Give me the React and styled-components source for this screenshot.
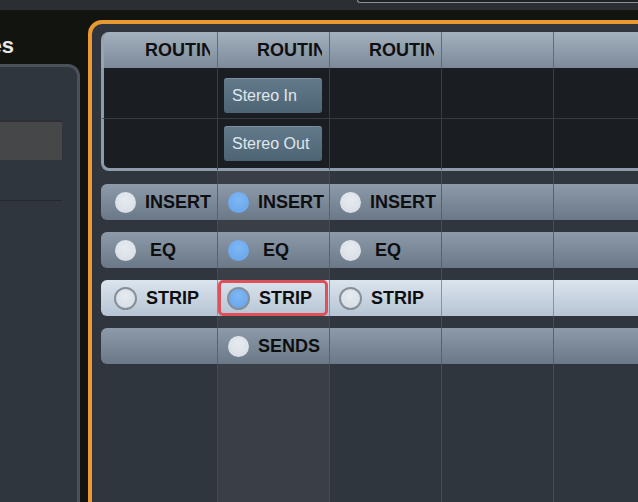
import React from "react";
import styled, { createGlobalStyle, css } from "styled-components";

const GlobalStyle = createGlobalStyle`
  html, body {
    margin: 0;
    padding: 0;
    background: #121410;
    overflow: hidden;
  }
  body {
    font-family: "Liberation Sans", Arial, sans-serif;
  }
`;

const Shell = styled.div`
  width: 638px;
  height: 502px;
  display: flex;
  flex-direction: column;
  overflow: hidden;
`;

const TopBar = styled.div`
  height: 10px;
  flex: none;
  background: #2b2e33;
  display: flex;
  justify-content: flex-end;
  align-items: flex-start;
`;

const TopTab = styled.div`
  width: 280px;
  height: 2px;
  background: #1d2024;
  border-left: 1px solid #8e9297;
  border-bottom: 1px solid #8e9297;
  border-bottom-left-radius: 6px;
`;

const Main = styled.div`
  flex: 1;
  display: flex;
  min-height: 0;
  overflow: hidden;
`;

const Sidebar = styled.div`
  width: 88px;
  flex: none;
  display: flex;
  flex-direction: column;
  padding-right: 8px;
  box-sizing: border-box;
`;

const SideTitle = styled.div`
  height: 54px;
  width: 14px;
  box-sizing: border-box;
  padding-top: 25px;
  display: flex;
  justify-content: flex-end;
  overflow: hidden;
  white-space: nowrap;
  color: #e8e8e8;
  font-size: 22px;
  font-weight: bold;
  line-height: 22px;
`;

const Panel = styled.div`
  flex: 1;
  background: #30363e;
  border-top: 3px solid #4a5159;
  border-right: 3px solid #4a5159;
  border-top-right-radius: 12px;
`;

const PanelBar = styled.div`
  margin-top: 53px;
  width: 62px;
  height: 40px;
  box-sizing: border-box;
  background: #454749;
  border-top: 2px solid #2c2f33;
`;

const PanelLine = styled.div`
  margin-top: 40px;
  width: 62px;
  height: 1px;
  background: #262a2f;
`;

const Frame = styled.div`
  flex: none;
  width: 600px;
  height: 520px;
  margin-top: 10px;
  box-sizing: border-box;
  border: 4px solid #e8992f;
  border-radius: 14px;
  background: #31363e;
  padding: 8px 0 0 9px;
  display: flex;
  overflow: hidden;
`;

const Column = styled.div`
  flex: none;
  width: ${(p) => p.$width}px;
  display: flex;
  flex-direction: column;
  background: ${(p) => (p.$active ? "#3a3f46" : "#30363e")};
`;

const HeadCell = styled.div`
  height: 36px;
  box-sizing: border-box;
  display: flex;
  align-items: center;
  padding: 0 7px 0 39px;
  background: linear-gradient(#a3b0be, #7d8a99);
  border-right: 1px solid #5f6b78;
  ${(p) =>
    p.$first &&
    css`
      padding-left: 41px;
      border-left: 3px solid #97a4b2;
      border-top-left-radius: 8px;
    `}
`;

const HeadText = styled.span`
  overflow: hidden;
  white-space: nowrap;
  font-size: 18px;
  font-weight: bold;
  color: #0f1012;
`;

const RouteCell = styled.div`
  height: ${(p) => (p.$last ? 52 : 51)}px;
  box-sizing: border-box;
  display: flex;
  align-items: center;
  padding-top: ${(p) => (p.$last ? 0 : 5)}px;
  background: #1a1d21;
  border-right: 1px solid #363c44;
  border-bottom: ${(p) => (p.$last ? "3px solid #8d9bab" : "1px solid #363c44")};
  ${(p) =>
    p.$first &&
    css`
      border-left: 3px solid #8d9bab;
    `}
  ${(p) =>
    p.$first &&
    p.$last &&
    css`
      border-bottom-left-radius: 8px;
    `}
`;

const RouteButton = styled.div`
  margin-left: 6px;
  width: 98px;
  height: 35px;
  box-sizing: border-box;
  display: flex;
  align-items: center;
  padding-left: 8px;
  border-radius: 3px;
  border-top: 1px solid #7891a1;
  background: linear-gradient(#617a8b, #4d6474);
  color: #e0e7ec;
  font-size: 16px;
`;

const Spacer = styled.div`
  height: ${(p) => p.$h}px;
  flex: none;
  box-sizing: border-box;
  border-right: 1px solid #454c54;
`;

const Filler = styled(Spacer)`
  flex: 1;
`;

const RowCell = styled.div`
  position: relative;
  height: 36px;
  flex: none;
  box-sizing: border-box;
  display: flex;
  align-items: center;
  gap: 9px;
  padding-left: ${(p) => (p.$first ? 14 : 10)}px;
  background: ${(p) =>
    p.$lit
      ? "linear-gradient(#dbe4ee, #b6c4d3)"
      : "linear-gradient(#8d9aa9, #6b7888)"};
  border-right: 1px solid ${(p) => (p.$lit ? "#8793a0" : "#56626f")};
  ${(p) =>
    p.$first &&
    css`
      border-radius: 6px 0 0 6px;
    `}
  ${(p) =>
    p.$focus &&
    css`
      &::after {
        content: "";
        position: absolute;
        inset: 0 1px 0 0;
        border: 3px solid #df505b;
        border-radius: 5px;
      }
    `}
`;

const Dot = styled.span`
  flex: none;
  width: ${(p) => (p.$ring ? 23 : 21)}px;
  height: ${(p) => (p.$ring ? 23 : 21)}px;
  margin-left: ${(p) => (p.$ring ? -1 : 0)}px;
  box-sizing: border-box;
  border-radius: 50%;
  background: ${(p) =>
    p.$on
      ? "radial-gradient(circle at 50% 35%, #7db7f5, #66a2e8)"
      : "radial-gradient(circle at 50% 35%, #e6ebf0, #d3dbe3)"};
  border: ${(p) => (p.$ring ? "2px solid #86909a" : "none")};
`;

const Label = styled.span`
  font-size: 18px;
  font-weight: bold;
  color: #0d0e10;
  white-space: nowrap;
`;

const rowLabels = ["INSERT", "\u00a0EQ", "STRIP", "SENDS"];

// rows: which row slots show a button, on: which of them are switched on
const columns = [
  { head: "ROUTING", routes: [null, null], rows: [0, 1, 2], on: [] },
  {
    head: "ROUTING",
    routes: ["Stereo In", "Stereo Out"],
    rows: [0, 1, 2, 3],
    on: [0, 1, 2],
    active: true,
  },
  { head: "ROUTING", routes: [null, null], rows: [0, 1, 2], on: [] },
  { head: "", routes: [null, null], rows: [], on: [] },
  { head: "", routes: [null, null], rows: [], on: [] },
];

const App = () => {
  return (
    <Shell>
      <GlobalStyle />
      <TopBar>
        <TopTab />
      </TopBar>
      <Main>
        <Sidebar>
          <SideTitle>Scenes</SideTitle>
          <Panel>
            <PanelBar />
            <PanelLine />
          </Panel>
        </Sidebar>
        <Frame>
          {columns.map((col, ci) => {
            const first = ci === 0;
            return (
              <Column key={ci} $width={first ? 117 : 112} $active={col.active}>
                <HeadCell $first={first}>
                  <HeadText>{col.head}</HeadText>
                </HeadCell>
                {col.routes.map((r, ri) => (
                  <RouteCell key={ri} $first={first} $last={ri === 1}>
                    {r && <RouteButton>{r}</RouteButton>}
                  </RouteCell>
                ))}
                <Spacer $h={13} />
                {rowLabels.map((label, ri) => {
                  const shown = col.rows.includes(ri);
                  const lit = ri === 2;
                  return (
                    <React.Fragment key={ri}>
                      {ri > 0 && <Spacer $h={12} />}
                      <RowCell
                        $first={first}
                        $lit={lit}
                        $focus={col.active && lit}
                      >
                        {shown && (
                          <>
                            <Dot $on={col.on.includes(ri)} $ring={lit} />
                            <Label>{label}</Label>
                          </>
                        )}
                      </RowCell>
                    </React.Fragment>
                  );
                })}
                <Filler />
              </Column>
            );
          })}
        </Frame>
      </Main>
    </Shell>
  );
};

export default App;
